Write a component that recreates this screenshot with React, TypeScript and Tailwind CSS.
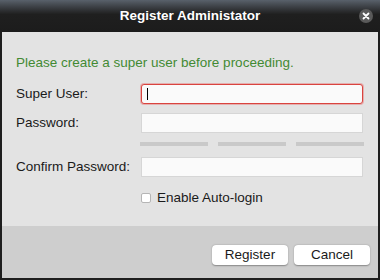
import React from "react";

const font = { fontFamily: '"Liberation Sans", Arial, sans-serif' };

function Field({ label, focused }: { label: string; focused?: boolean }) {
  return (
    <div className="flex items-center h-[20px]">
      <label className="w-[125px] text-[13.5px] text-[#1a1a1a]">{label}</label>
      <div
        className={
          "relative w-[222px] h-[20px] bg-[#fafafa] " +
          (focused
            ? "border border-[#d9443f] rounded-[3px] shadow-[0_0_0_1px_rgba(230,110,110,0.45)]"
            : "border border-[#d6d6d6]")
        }
      >
        {focused && <span className="absolute left-[5px] top-[3px] w-px h-[12px] bg-black" />}
      </div>
    </div>
  );
}

export default function App() {
  return (
    <div className="w-[380px] h-[280px] flex flex-col bg-[#1e1e1e]" style={font}>
      <div className="relative h-[32px] shrink-0 flex items-center justify-center bg-gradient-to-b from-[#59616b] via-[#1f1f1f] via-45% to-[#1c1c1c]">
        <span className="text-[13.5px] font-bold text-white">Register Administator</span>
        <button className="absolute right-[7px] top-[9px] w-[14px] h-[14px] rounded-full bg-[#5a5a5a] flex items-center justify-center">
          <svg width="8" height="8" viewBox="0 0 8 8">
            <path d="M1.5 1.5 L6.5 6.5 M6.5 1.5 L1.5 6.5" stroke="#fff" strokeWidth="1.8" strokeLinecap="round" />
          </svg>
        </button>
      </div>
      <div className="flex-1 flex flex-col px-[2px] pb-[2px]">
        <div className="h-[194px] bg-[#e3e3e3] pl-[14px] pt-[23px] flex flex-col">
          <p className="h-[16px] leading-[16px] text-[13.5px] text-[#428a33]">
            Please create a super user before proceeding.
          </p>
          <div className="mt-[13px]">
            <Field label="Super User:" focused />
          </div>
          <div className="mt-[9px]">
            <Field label="Password:" />
          </div>
          <div className="mt-[9px] ml-[124px] flex gap-[10px]">
            <div className="w-[68px] h-[4px] bg-[#c9c9c9]" />
            <div className="w-[68px] h-[4px] bg-[#c9c9c9]" />
            <div className="w-[68px] h-[4px] bg-[#c9c9c9]" />
          </div>
          <div className="mt-[11px]">
            <Field label="Confirm Password:" />
          </div>
          <div className="mt-[11px] ml-[125px] flex items-center gap-[6px]">
            <span className="w-[10px] h-[10px] bg-white border border-[#b5b5b5] rounded-[2px]" />
            <span className="text-[13.5px] text-[#1a1a1a]">Enable Auto-login</span>
          </div>
        </div>
        <div className="flex-1 bg-[#cecece] flex items-start justify-end pr-[8px] pt-[19px] gap-[6px]">
          <button className="w-[76px] h-[20px] bg-white rounded-[4px] shadow-[0_0.5px_1.5px_rgba(0,0,0,0.35)] text-[13.5px] text-[#1a1a1a]">
            Register
          </button>
          <button className="w-[76px] h-[20px] bg-white rounded-[4px] shadow-[0_0.5px_1.5px_rgba(0,0,0,0.35)] text-[13.5px] text-[#1a1a1a]">
            Cancel
          </button>
        </div>
      </div>
    </div>
  );
}
